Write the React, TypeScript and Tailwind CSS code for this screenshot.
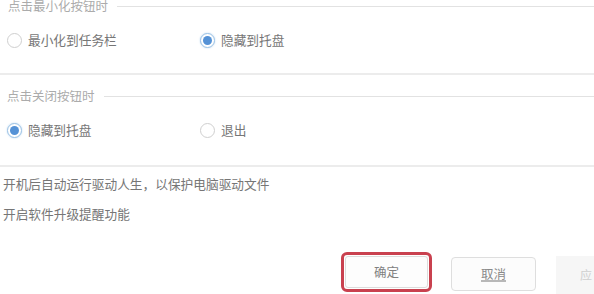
import React from "react";

const font = { fontFamily: '"Noto Sans CJK SC", "Noto Sans", sans-serif' };

function Radio({ checked, label }: { checked?: boolean; label: string }) {
  return (
    <div className="flex items-center">
      <span
        className={
          "flex h-[15px] w-[15px] items-center justify-center rounded-full border bg-white " +
          (checked ? "border-[#9cc3e6] shadow-[0_0_2px_#bcd7ef]" : "border-[#cfcfcf]")
        }
      >
        {checked && <span className="h-[9px] w-[9px] rounded-full bg-[#5592d6]" />}
      </span>
      <span className="ml-[6px] text-[12.7px] leading-none text-[#767676]">{label}</span>
    </div>
  );
}

function Header({ text, pad }: { text: string; pad: string }) {
  return (
    <div className="flex items-center">
      <span className={"text-[12.5px] leading-none text-[#ababab] " + pad}>{text}</span>
      <span className="ml-[9px] h-px flex-1 bg-[#e2e2e2]" />
    </div>
  );
}

export default function App() {
  return (
    <div className="h-[294px] w-[594px] overflow-hidden bg-white" style={font}>
      <div className="pt-0">
        <div className="h-[14px]">
          <Header text="点击最小化按钮时" pad="pl-[8px]" />
        </div>
        <div className="mt-[19px] flex h-[14px] items-center pl-[7px]">
          <div className="w-[193px]">
            <Radio label="最小化到任务栏" />
          </div>
          <Radio checked label="隐藏到托盘" />
        </div>
        <div className="mt-[26px] h-[2px] bg-[#ececec]" />
        <div className="mt-[15px] h-[14px]">
          <Header text="点击关闭按钮时" pad="pl-[7px]" />
        </div>
        <div className="mt-[19px] flex h-[14px] items-center pl-[7px]">
          <div className="w-[193px]">
            <Radio checked label="隐藏到托盘" />
          </div>
          <Radio label="退出" />
        </div>
        <div className="mt-[28px] h-[2px] bg-[#ececec]" />
        <div className="mt-[10px] pl-[3px] text-[12.7px] leading-[14px] text-[#767676]">
          开机后自动运行驱动人生，以保护电脑驱动文件
        </div>
        <div className="mt-[16px] pl-[3px] text-[12.7px] leading-[14px] text-[#767676]">
          开启软件升级提醒功能
        </div>
        <div className="mt-[31px] flex items-start pl-[341px]">
          <div className="h-[40px] w-[91px] rounded-[6px] border-[3px] border-[#c9414f] p-px">
            <div className="flex h-full w-full items-center justify-center rounded-[3px] border border-[#dcdcdc] bg-[#fdfdfd] text-[12.5px] text-[#808080]">
              确定
            </div>
          </div>
          <div className="ml-[19px] mt-[5px] flex h-[34px] w-[85px] items-center justify-center rounded-[4px] border border-[#dedede] bg-[#fcfcfc] text-[12.5px] text-[#8a8a8a]">
            <span className="border-b-2 border-[#b8b8b8] leading-[13px]">取消</span>
          </div>
          <div className="ml-[20px] mt-[4px] flex h-[38px] flex-1 items-center justify-end bg-[#f6f6f6] pr-[2px] text-[12px] text-[#d0d0d0]">
            应
          </div>
        </div>
      </div>
    </div>
  );
}
